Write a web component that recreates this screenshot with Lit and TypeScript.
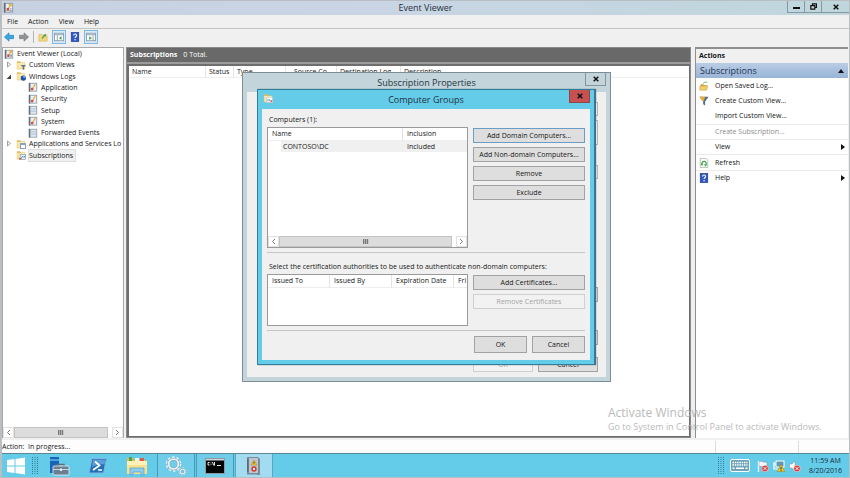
import { LitElement, html, svg, css, nothing, TemplateResult } from "lit";
import { customElement, property } from "lit/decorators.js";
import { classMap } from "lit/directives/class-map.js";

const folder = svg`
  <path d="M1 1.5h4l1 1.500h5v8H1z" fill="#e3bd5c"/>
  <path d="M1.500 4h9v6.500h-9z" fill="#fae6a0"/>
  <path d="M1.500 4h9v1h-9z" fill="#fdf3cf"/>`;

const logbook = svg`
  <rect x="1" y="1" width="10" height="10.500" fill="#8b98a5"/>
  <rect x="3" y="2" width="7" height="8.500" fill="#e9eff4"/>
  <path d="M1 1h1.500v10.500H1z" fill="#5f6f80"/>`;

const icons: Record<string, TemplateResult> = {
  viewer: svg`${logbook}
    <path d="M5.500 2.500l2-1 2.500 2-1 1.500z" fill="#f0b52e"/>
    <path d="M9 3L5 9.500 4 9l3.500-6z" fill="#e4a53a"/>
    <path d="M4 6.500h2.500v3H4z" fill="#cf4b3c"/>
    <path d="M7 7h2.500v1H7zM7 9h2.500v1H7z" fill="#6d87a5"/>`,
  log: svg`${logbook}
    <path d="M9.500 3L6 8 5 7.500l3-5z" fill="#e8ab35"/>
    <circle cx="5" cy="8.500" r="1.700" fill="#d5503f"/>`,
  setup: svg`${logbook}
    <path d="M3.500 4h6M3.500 6h6M3.500 8h6" stroke="#a9c1d8" stroke-width="1"/>`,
  custom: svg`${folder}
    <path d="M5.500 6H12L9.700 8.500V12L8 11V8.500z" fill="#5d7893"/>`,
  windows: svg`${folder}
    <circle cx="8.800" cy="8.500" r="3.200" fill="#1e4fb4"/>
    <path d="M8.500 5.500a3.200 3.200 0 0 1 3 3L9 8z" fill="#8fb4ee"/>`,
  services: svg`${folder}
    <rect x="5.500" y="5.500" width="6" height="6" fill="#fff" stroke="#7d92a8"/>
    <path d="M5.500 6.500h6" stroke="#7fa7d0" stroke-width="1.500"/>`,
  subs: svg`${folder}
    <rect x="5" y="5.500" width="6.500" height="6" fill="#e8f2fb" stroke="#7c9cc0" stroke-width=".8"/>
    <path d="M6 10l2-2.500 1.500 1.500L11 7" fill="none" stroke="#3f79b8"/>
    <path d="M3.500 9.500h3v2h-3z" fill="#d7644c"/>`,
  groups: svg`${folder}
    <rect x="4.500" y="5" width="7" height="6.500" fill="#fff" stroke="#b8c4cf" stroke-width=".8"/>
    <path d="M6 7v3M8 7.500v2.500" stroke="#4f87c7"/>
    <path d="M9 8.500h2v2.500H9z" fill="#e06a5c"/>`,
  back: svg`<path d="M.5 6L6 1v3h5.500v4H6v3z" fill="#38a8e4" stroke="#1c78b8" stroke-width=".7"/>`,
  forward: svg`<path d="M11.500 6L6 1v3H.5v4H6v3z" fill="#8f9396" stroke="#6f7376" stroke-width=".7"/>`,
  up: svg`<path d="M1 3h4l1 1.500h5V11H1z" fill="#f3d67e" stroke="#d3ab4a" stroke-width=".6"/>
    <path d="M4.500 8c.3-2 1.200-3 2.500-3.500L6 3.500 10 2 9.200 5.800 8.300 5C7 6 6.300 6.800 5.800 8.200z" fill="#43a845"/>`,
  pane: svg`<rect x=".5" y="1.500" width="11" height="9" fill="#fff" stroke="#8493a3"/>
    <path d="M1 2h10v2H1z" fill="#a9b8c8"/>
    <path d="M4 4v6.500" stroke="#8493a3"/>
    <path d="M9 5v4.500L6 7.200z" fill="#36a04a"/>`,
  paneRight: svg`<rect x=".5" y="1.500" width="11" height="9" fill="#fff" stroke="#8493a3"/>
    <path d="M1 2h10v2H1z" fill="#a9b8c8"/>
    <path d="M8.500 4v6.500" stroke="#8493a3"/>
    <path d="M4 5v4.500L7 7.200z" fill="#36a04a"/>`,
  help: svg`<rect x="1.500" y=".5" width="9" height="11" fill="#2f58c4" stroke="#1b3c93" stroke-width=".8"/>
    <path d="M4.300 4.200c0-2.400 3.600-2.400 3.600 0 0 1.500-1.800 1.400-1.800 3" fill="none" stroke="#fff" stroke-width="1.300"/>
    <circle cx="6.100" cy="9.200" r=".9" fill="#fff"/>`,
  open: svg`<path d="M2 4h3l1 1h4v2H2z" fill="#cda23c"/>
    <path d="M1 6h9.500L9 11H1z" fill="#f0cf70" stroke="#c89b36" stroke-width=".6"/>
    <path d="M5 3c1.500-2 3.500-2 5-1" fill="none" stroke="#67b257" stroke-width="1.200"/>`,
  filter: svg`<path d="M.5 1h11L7.300 6.500V11.500L5 10V6.500z" fill="#4f6c8c"/>
    <path d="M.5 1h7L5.500 6.500H5z" fill="#efa92f"/>`,
  refresh: svg`<path d="M1.500.5h7l2 2v9h-9z" fill="#fff" stroke="#96a896" stroke-width=".8"/>
    <path d="M3.500 7.500a2.700 2.700 0 1 1 4.600 1" fill="none" stroke="#35a043" stroke-width="1.500"/>
    <path d="M2 7h3.200L3.600 9.500zM6.500 7.500L9.500 8 7 10.500z" fill="#35a043"/>`,
};

const icon = (name: string, size = 10) =>
  svg`<svg class="icon" width=${size} height=${size} viewBox="0 0 12 12" aria-hidden="true">${icons[name]}</svg>`;

const start = html`<svg width="18" height="18" viewBox="0 0 18 18" aria-hidden="true">
  <path d="M0 3l7.500-1v6.600H0zM8.500 1.900L18 .5v8.100H8.500zM0 9.500h7.500V16L0 15zM8.500 9.500H18v8l-9.500-1.400z" fill="#fff"/></svg>`;
const grip = html`<svg width="6" height="18" viewBox="0 0 6 18" aria-hidden="true">
  <path d="M.5 0v18M3 0v18M5.500 0v18" stroke="#2f7c98" stroke-width="1" stroke-dasharray="1 1"/></svg>`;
const serverManager = html`<svg width="22" height="20" viewBox="0 0 22 20" aria-hidden="true">
  <path d="M2 1h9v16H2z" fill="#1566b5"/><path d="M2 4h9" stroke="#69b4ea" stroke-width="1.500"/>
  <path d="M9 10.500V8.500h7v2" fill="none" stroke="#5e6d7c" stroke-width="1.500"/>
  <rect x="5" y="10" width="16" height="9" rx="1" fill="#6c7f92" stroke="#e8f2f8" stroke-width=".8"/>
  <path d="M5 13.500h16" stroke="#c6d5e0"/><path d="M12 12.500h2v2.500h-2z" fill="#eaf1f5"/></svg>`;
const powershell = html`<svg width="20" height="18" viewBox="0 0 20 18" aria-hidden="true">
  <path d="M4 1.500h14.500L15.500 16H1z" fill="#2670b8" stroke="#7db7e2"/>
  <path d="M5 2.500h12.500l-1 5C12 7 8 8 4 10z" fill="#5a9cd6"/>
  <path d="M7 4.500l4.500 4L5 13M10 13h4" fill="none" stroke="#fff" stroke-width="1.700"/></svg>`;
const explorer = html`<svg width="22" height="20" viewBox="0 0 22 20" aria-hidden="true">
  <path d="M1 2h6l1 2h12v14H1z" fill="#e0b94f"/><path d="M3 1h3v4H3z" fill="#4ca64c"/><path d="M9 2h4v3H9z" fill="#f5f5e8"/><path d="M14 2h4v3h-4z" fill="#d75b4b"/>
  <path d="M1 5h20v13H1z" fill="#f8e08c"/><path d="M1 5h20v4H1z" fill="#fdf0b8"/>
  <path d="M4 19v-7h14v7h-3v-3H7v3z" fill="#8fcdf0" stroke="#4a9fd0" stroke-width=".7"/></svg>`;
const gears = html`<svg width="22" height="20" viewBox="0 0 22 20" aria-hidden="true">
  <circle cx="8.500" cy="8" r="6.300" fill="none" stroke="#eef4f7" stroke-width="2.800" stroke-dasharray="2.200 1.760"/>
  <circle cx="8.500" cy="8" r="4.900" fill="none" stroke="#7b9cae" stroke-width="2.800"/>
  <circle cx="8.500" cy="8" r="4.900" fill="none" stroke="#eaf2f6" stroke-width="1.900"/>
  <circle cx="17.500" cy="15.500" r="3.200" fill="none" stroke="#eef4f7" stroke-width="1.500" stroke-dasharray="1.400 1.110"/>
  <circle cx="17.500" cy="15.500" r="2.300" fill="none" stroke="#7b9cae" stroke-width="1.800"/>
  <circle cx="17.500" cy="15.500" r="2.300" fill="none" stroke="#e6eff4" stroke-width="1.100"/></svg>`;
const prompt = html`<svg width="20" height="16" viewBox="0 0 20 16" aria-hidden="true">
  <rect x=".5" y=".5" width="19" height="15" fill="#050505" stroke="#8d9aa3"/><path d="M1 1h18v1.500H1z" fill="#c9d4da"/>
  <path d="M4.500 4.500H3v2.500h1.500M6 4.500v.8M6 6.300v.8M7.500 4l1.200 3.500M9.500 4v3.500M12 7.500h4" fill="none" stroke="#fff" stroke-width=".9"/></svg>`;
const eventLog = html`<svg width="16" height="20" viewBox="0 0 16 20" aria-hidden="true">
  <path d="M1 1h11l2 2v14l-2 1.500H1z" fill="#7d8b98"/><rect x="3" y="2" width="9" height="15" fill="#b9c6d3"/>
  <path d="M1 3h1.500v13H1z" fill="#5b6a78"/><path d="M8 4l3 5H5z" fill="#f6cb2c" stroke="#b98f18" stroke-width=".6"/><path d="M8 5.800v1.800" stroke="#333"/>
  <circle cx="8" cy="13" r="2.700" fill="#d43e32"/><path d="M7 12l2 2M9 12l-2 2" stroke="#fff" stroke-width=".9"/>
  <path d="M12 17l3 1.500h-4z" fill="#54626f"/></svg>`;
const keyboard = html`<svg width="20" height="13" viewBox="0 0 20 13" aria-hidden="true">
  <rect x=".5" y=".5" width="19" height="12" rx="1.500" fill="#6da4b8" stroke="#fff"/>
  <path d="M2.500 3.500h15M2.500 6h15" stroke="#fff" stroke-width="1.500" stroke-dasharray="1.500 .8"/><path d="M2.500 9.300h2M6 9.300h8M15.500 9.300h2" stroke="#fff" stroke-width="1.500"/></svg>`;
const badge = svg`<circle cx="8" cy="8.500" r="3.300" fill="#d93a3a" stroke="#fff" stroke-width=".5"/><path d="M6.700 7.200l2.600 2.600M9.300 7.200L6.700 9.800" stroke="#fff"/>`;
const flag = html`<svg width="12" height="12" viewBox="0 0 12 12" aria-hidden="true">
  <path d="M1.500 1v11" stroke="#fff" stroke-width="1.300"/><path d="M2 1.500c3-1 4 1.500 8 .5v5c-4 1-5-1.500-8-.5z" fill="#f4f8fa" stroke="#70919f" stroke-width=".5"/>${badge}</svg>`;
const network = html`<svg width="12" height="12" viewBox="0 0 12 12" aria-hidden="true">
  <rect x="3" y="1" width="8" height="6" fill="#5d98b4" stroke="#fff"/><path d="M1 2v7h4M1 4h2" fill="none" stroke="#fff" stroke-width="1.200"/>
  <path d="M8 4.500l3.700 7H4.300z" fill="#f8cd2d" stroke="#9c7a12" stroke-width=".5"/><path d="M8 7v2.500M8 10v.8" stroke="#222"/></svg>`;
const sound = html`<svg width="12" height="12" viewBox="0 0 12 12" aria-hidden="true">
  <path d="M.5 4h2.500l3-3v10l-3-3H.5z" fill="#fff" stroke="#70919f" stroke-width=".5"/>${badge}</svg>`;

const shared = css`
  * { box-sizing: border-box; }
  button, input, textarea, select { font: inherit; color: inherit; margin: 0; padding: 0; border: 0; background: none; border-radius: 0; }
  svg { display: block; flex: none; }
  table { border-collapse: separate; border-spacing: 0; table-layout: fixed; width: 100%; }
  th, td { font-weight: 400; text-align: left; padding: 0 0 0 4px; white-space: nowrap; overflow: hidden; }
  ul { list-style: none; margin: 0; padding: 0; }
`;

@customElement("scroll-strip")
class ScrollStrip extends LitElement {
  static styles = [shared, css`
    :host { display: flex; height: 11px; background: #fff; }
    .arrow { width: 11px; display: grid; place-items: center; border: 1px solid #e2e2e2; background: #fff; }
    .track { flex: 1; display: flex; padding-right: 4px; min-width: 0; }
    .thumb { flex: 1; display: grid; place-items: center; background: #dcdcdc; border: 1px solid #c4c4c4; }
  `];
  render() {
    return html`
      <button class="arrow" aria-label="Scroll left"><svg width="5" height="7" viewBox="0 0 5 7"><path d="M4 1L1.500 3.500 4 6" fill="none" stroke="#777"/></svg></button>
      <div class="track"><div class="thumb"><svg width="6" height="5" viewBox="0 0 6 5"><path d="M.5 0v5M2.500 0v5M4.500 0v5" stroke="#777" stroke-width="1.400"/></svg></div></div>
      <button class="arrow" aria-label="Scroll right"><svg width="5" height="7" viewBox="0 0 5 7"><path d="M1 1l2.500 2.500L1 6" fill="none" stroke="#777"/></svg></button>`;
  }
}

@customElement("console-tree")
class ConsoleTree extends LitElement {
  static styles = [shared, css`
    :host { display: flex; flex-direction: column; background: #fff; border: 1px solid #a9a9a9; border-bottom: 0; overflow: hidden; }
    .tree { display: grid; grid-auto-rows: 1fr; height: 113px; flex: none; }
    .row { display: flex; align-items: center; gap: 3px; width: 100%; white-space: nowrap; }
    .arrow { width: 8px; flex: none; display: grid; place-items: center; }
    .depth0 { padding-left: 1px; }
    .depth1 { padding-left: 2px; }
    .depth2 { padding-left: 25px; }
    .label { padding: 0 2px 0 0; line-height: 11px; }
    .picked { background: #f0f0f0; box-shadow: 0 0 0 1px #dedede; }
    .fill { flex: 1; }
  `];
  private rows: [number, string, string, string?][] = [
    [0, "viewer", "Event Viewer (Local)"],
    [1, "custom", "Custom Views", "closed"],
    [1, "windows", "Windows Logs", "open"],
    [2, "log", "Application"],
    [2, "log", "Security"],
    [2, "setup", "Setup"],
    [2, "log", "System"],
    [2, "setup", "Forwarded Events"],
    [1, "services", "Applications and Services Lo", "closed"],
    [1, "subs", "Subscriptions", "none"],
  ];
  render() {
    return html`
      <ul class="tree">${this.rows.map(([depth, name, label, state]) => html`
        <li><button class=${classMap({ row: true, ["depth" + depth]: true })}>
          ${state ? html`<span class="arrow">${state === "none" ? nothing : html`<svg width="6" height="7" viewBox="0 0 6 7">
            ${state === "open" ? svg`<path d="M5 1.500v4.500H.5z" fill="#444"/>` : svg`<path d="M1.500 1l3 2.500-3 2.500z" fill="#fff" stroke="#888" stroke-width=".8"/>`}</svg>`}</span>` : nothing}
          ${icon(name)}<span class=${classMap({ label: true, picked: state === "none" })}>${label}</span>
        </button></li>`)}</ul>
      <div class="fill"></div>
      <scroll-strip></scroll-strip>`;
  }
}

@customElement("subscription-list")
class SubscriptionList extends LitElement {
  static styles = [shared, css`
    :host { display: flex; flex-direction: column; min-width: 0; background: #9c9c9c; border: 1px solid #8a8a8a; }
    .head { height: 14px; background: #696969; color: #fff; display: flex; align-items: center; gap: 6px; padding: 0 3px; }
    .head b { font-weight: 700; }
    .list { flex: 1; margin-top: 2px; background: #fff; border: 2px solid #6e6e6e; border-right-width: 1px; border-bottom-width: 1px; }
    th { border-right: 1px solid #e5e5e5; height: 12px; border-bottom: 1px solid #eee; padding-left: 3px; }
    th:last-child { border-right: 0; }
    .name { width: 77px; } .status { width: 28px; } .type { width: 52px; } .source { width: 51px; padding-left: 8px; } .dest { width: 64px; }
  `];
  render() {
    return html`
      <div class="head"><b>Subscriptions</b><span>0 Total.</span></div>
      <div class="list"><table><thead><tr>
        <th class="name">Name</th><th class="status">Status</th><th class="type">Type</th>
        <th class="source">Source Co...</th><th class="dest">Destination Log</th><th>Description</th>
      </tr></thead></table></div>`;
  }
}

@customElement("actions-pane")
class ActionsPane extends LitElement {
  static styles = [shared, css`
    :host { display: block; background: #fff; border: solid #8f8f8f; border-width: 2px 0 0 1px; }
    .title { height: 14px; line-height: 14px; font-weight: 700; padding-left: 3px; background: #f0f0f0; }
    .section { width: 100%; height: 15px; display: flex; align-items: center; justify-content: space-between; padding: 0 4px; font-size: 9px; color: #1f3450; background: linear-gradient(#bacde5, #98b4d7); }
    .items { display: grid; grid-auto-rows: 1fr; height: 107px; }
    .item { width: 100%; height: 100%; display: flex; align-items: center; gap: 6px; padding: 0 3px; text-align: left; }
    .rule { border-top: 1px solid #ebebeb; }
    .glyph { width: 10px; }
    .text { flex: 1; }
    .item:disabled { color: #8d8d8d; }
  `];
  private items: [string, string, boolean, boolean?][] = [
    ["open", "Open Saved Log...", false],
    ["filter", "Create Custom View...", false],
    ["", "Import Custom View...", false],
    ["", "Create Subscription...", true],
    ["", "View", true, true],
    ["refresh", "Refresh", true],
    ["help", "Help", true, true],
  ];
  render() {
    return html`
      <div class="title">Actions</div>
      <button class="section">Subscriptions<svg width="6" height="4" viewBox="0 0 6 4"><path d="M3 0l3 4H0z" fill="#111"/></svg></button>
      <ul class="items">${this.items.map(([name, label, rule, more]) => html`
        <li class=${classMap({ rule })}><button class="item" ?disabled=${label === "Create Subscription..."}>
          <span class="glyph">${name ? icon(name) : nothing}</span><span class="text">${label}</span>
          ${more ? html`<svg width="4" height="6" viewBox="0 0 4 6"><path d="M0 0l4 3-4 3z" fill="#111"/></svg>` : nothing}
        </button></li>`)}</ul>`;
  }
}

@customElement("dialog-frame")
class DialogFrame extends LitElement {
  @property() heading = "";
  @property() icon = "";
  @property({ type: Boolean, reflect: true }) active = false;
  static styles = [shared, css`
    :host { display: flex; flex-direction: column; padding: 0 4px 4px; background: #c3d5db; border: 1px solid #7d8d96; }
    :host([active]) { background: #64cbe9; border-color: #2f7f9c; box-shadow: 1px 0 1px #4e6b78; }
    .bar { display: grid; grid-template-columns: 1fr auto 1fr; height: 19px; flex: none; color: #1d3440; font-size: 9px; }
    .left { padding: 3px 1px; }
    .name { align-self: center; }
    .close { justify-self: end; width: 21px; height: 13px; display: grid; place-items: center; border: 1px solid #8395a0; border-top: 0; }
    :host([active]) .close { background: #c75050; border-color: #8e4646; }
    .body { flex: 1; background: #f0f0f0; display: flex; flex-direction: column; min-height: 0; }
  `];
  render() {
    return html`
      <div class="bar"><span class="left">${this.icon ? icon(this.icon) : nothing}</span><span class="name">${this.heading}</span>
        <button class="close" aria-label="Close"><svg width="6" height="6" viewBox="0 0 6 6"><path d="M.7.7l4.600 4.600M5.300.7L.7 5.300" stroke="#111" stroke-width="1.500"/></svg></button></div>
      <div class="body"><slot></slot></div>`;
  }
}

@customElement("app-root")
class AppRoot extends LitElement {
  static styles = [shared, css`
    :host { display: flex; flex-direction: column; height: 100vh; position: relative; overflow: hidden; background: #f0f0f0; border: solid #b9bec2; border-width: 1px 1px 1px 2px; font: 7px/10px "Open Sans", "Noto Sans", sans-serif; color: #161616; box-sizing: border-box; }
    .titlebar { display: grid; grid-template-columns: 1fr auto 1fr; height: 14px; flex: none; background: linear-gradient(90deg, #c6d1e1, #c9d5e4 45%, #bfd6dd); font-size: 9px; color: #24323c; }
    .titlebar .app { padding: 1px; }
    .titlebar .name { align-self: center; }
    .controls { display: flex; justify-self: end; height: 12px; }
    .control { width: 17px; display: grid; place-items: center; border: 1px solid #8798a2; border-width: 0 0 1px 1px; }
    .control.wide { width: 28px; }
    .menubar { height: 14px; flex: none; display: flex; gap: 10px; padding: 0 5px; border-bottom: 1px solid #c4c4c4; }
    .toolbar { height: 17px; flex: none; display: flex; align-items: center; gap: 3px; padding: 0 1px 1px; }
    .tool { height: 14px; padding: 0 1px; display: grid; place-items: center; }
    .tool.on { width: 14px; border: 1px solid #7db9e0; background: #d6eaf7; }
    .sep { width: 1px; height: 12px; background: #b5b5b5; }
    .main { flex: 1; display: grid; grid-template-columns: 122px minmax(0, 1fr) 156px; column-gap: 2px; min-height: 0; padding-top: 1px; }
    .main actions-pane { margin: 0 1px 0 2px; }
    .status { height: 13px; margin-top: 2px; flex: none; display: grid; grid-template-columns: 1fr 83px 51px; align-items: center; background: #fdfdfd; }
    .status .cell { border-left: 1px solid #ddd; height: 12px; }
    .taskbar { height: 24px; flex: none; display: flex; background: #64cbe9; border-top: 1px solid #5c8795; }
    .startbtn { width: 28px; display: grid; place-items: center; }
    .grip { width: 10px; display: grid; place-items: center; }
    .task { width: 38px; margin-right: 1px; display: grid; place-items: center; border: 1px solid transparent; border-width: 0 1px; }
    .task.running { background: #70cdea; border-color: #489bb6; }
    .task.current { background: #a3dbf1; border-color: #5aa5c0; }
    .space { flex: 1; }
    .tray { display: flex; align-items: center; gap: 4px; padding: 0 2px 0 4px; }
    .tray .keys { margin-right: 3px; }
    .clock { width: 45px; text-align: center; display: grid; align-content: center; color: #16303a; margin-right: 1px; }
    .watermark { position: absolute; left: 606px; bottom: 44px; color: #b3b3b3; opacity: .9; z-index: 5; white-space: nowrap; }
    .watermark .title { font-size: 12px; line-height: 16px; }
    .watermark .hint { font-size: 9px; line-height: 12px; }
    .props { position: absolute; left: 240px; top: 71px; width: 369px; height: 310px; }
    .groups { position: absolute; left: 255px; top: 88px; width: 338px; height: 276px; }
    .form { display: flex; flex-direction: column; align-items: flex-end; padding: 10px 8px 0; }
    .field { width: 260px; height: 14px; border: 1px solid #b5b5b5; background: #fff; display: block; }
    .field + .field { margin-top: 4px; }
    .field.tall { height: 25px; resize: none; }
    .field.log { margin-top: 20px; background: #efefef; appearance: none; }
    .push { background: #dedede; border: 1px solid #a2a2a2; height: 15px; white-space: nowrap; }
    .push:disabled { background: #f2f2f2; color: #a4a4a4; border-color: #cfcfcf; }
    .push.focus { border-color: #6b9dc4; }
    .push.foot { width: 60px; }
    .events { margin-top: 108px; width: 60px; }
    .adv { margin-top: 28px; width: 60px; }
    .footer { display: flex; gap: 5px; margin-top: 12px; }
    .inner { display: grid; grid-template-columns: minmax(0, 1fr) 112px; column-gap: 5px; padding: 4px 5px 0; }
    .caption { grid-column: 1 / -1; line-height: 14px; padding-left: 2px; }
    .box { background: #fff; border: 1px solid #9a9a9a; display: flex; flex-direction: column; overflow: hidden; }
    .box.computers { height: 121px; }
    .box.certs { height: 52px; }
    .box th { height: 13px; border-right: 1px solid #e3e3e3; border-bottom: 1px solid #eee; }
    .box th:last-child { border-right: 0; }
    .box td { height: 11px; background: #f0f0f0; }
    .box td:first-child { padding-left: 2px; border-left: 13px solid #fff; }
    .wide-col { width: 135px; } .issued { width: 62px; }
    .stack { display: flex; flex-direction: column; gap: 4px; padding-top: 1px; }
    .line { grid-column: 1 / -1; border-top: 1px solid #c6c6c6; margin-top: 4px; }
    .ends { grid-column: 1 / -1; display: flex; justify-content: flex-end; gap: 5px; margin-top: 5px; }
    .ends .push { width: 53px; height: 17px; }
    .gap { grid-column: 1 / -1; height: 7px; }
    .fill { flex: 1; }
  `];
  render() {
    return html`
      <header class="titlebar"><span class="app">${icon("viewer", 11)}</span><span class="name">Event Viewer</span>
        <span class="controls">
          <button class="control" aria-label="Minimize"><svg width="7" height="6" viewBox="0 0 7 6"><path d="M0 4h7" stroke="#111" stroke-width="2"/></svg></button>
          <button class="control" aria-label="Restore"><svg width="7" height="7" viewBox="0 0 7 7"><path d="M2.500 2V.8h4v3.700H5M.8 2.700h4v3.500h-4z" fill="none" stroke="#111" stroke-width="1.200"/></svg></button>
          <button class="control wide" aria-label="Close"><svg width="6" height="6" viewBox="0 0 6 6"><path d="M.7.7l4.600 4.600M5.300.7L.7 5.300" stroke="#111" stroke-width="1.500"/></svg></button>
        </span></header>
      <nav class="menubar">${["File", "Action", "View", "Help"].map((m) => html`<button>${m}</button>`)}</nav>
      <div class="toolbar">
        <button class="tool" aria-label="Back">${icon("back")}</button>
        <button class="tool" aria-label="Forward">${icon("forward")}</button>
        <span class="sep"></span>
        <button class="tool" aria-label="Up">${icon("up")}</button>
        <button class="tool on" aria-label="Console tree">${icon("pane")}</button>
        <button class="tool" aria-label="Help">${icon("help")}</button>
        <button class="tool on" aria-label="Action pane">${icon("paneRight")}</button>
      </div>
      <main class="main">
        <console-tree></console-tree>
        <subscription-list></subscription-list>
        <actions-pane></actions-pane>
      </main>
      <footer class="status"><span>Action:&nbsp; In progress...</span><span class="cell"></span><span class="cell"></span></footer>
      <div class="taskbar">
        <button class="startbtn" aria-label="Start">${start}</button><span class="grip">${grip}</span>
        <button class="task" aria-label="Server Manager">${serverManager}</button>
        <button class="task" aria-label="PowerShell">${powershell}</button>
        <button class="task" aria-label="File Explorer">${explorer}</button>
        <button class="task running" aria-label="Services">${gears}</button>
        <button class="task running" aria-label="Command Prompt">${prompt}</button>
        <button class="task current" aria-label="Event Viewer">${eventLog}</button>
        <span class="space"></span><span class="grip">${grip}</span>
        <div class="tray"><span class="keys">${keyboard}</span>${flag}${network}${sound}</div>
        <div class="clock"><span>11:59 AM</span><span>8/20/2016</span></div>
      </div>

      <dialog-frame class="props" heading="Subscription Properties">
        <div class="form">
          <input class="field" aria-label="Subscription name">
          <textarea class="field tall" aria-label="Description"></textarea>
          <select class="field log" aria-label="Destination log"></select>
          <button class="push events" aria-label="Select Events"></button>
          <button class="push adv" aria-label="Advanced"></button>
          <div class="footer"><button class="push foot" disabled>OK</button><button class="push foot">Cancel</button></div>
        </div>
      </dialog-frame>

      <dialog-frame class="groups" active heading="Computer Groups" icon="groups">
        <div class="inner">
          <div class="caption">Computers (1):</div>
          <div class="box computers">
            <table><thead><tr><th class="wide-col">Name</th><th>Inclusion</th></tr></thead>
              <tbody><tr><td>CONTOSO\\DC</td><td>Included</td></tr></tbody></table>
            <div class="fill"></div><scroll-strip></scroll-strip>
          </div>
          <div class="stack">
            <button class="push focus">Add Domain Computers...</button>
            <button class="push">Add Non-domain Computers...</button>
            <button class="push">Remove</button>
            <button class="push">Exclude</button>
          </div>
          <div class="line"></div>
          <div class="gap"></div>
          <div class="caption">Select the certification authorities to be used to authenticate non-domain computers:</div>
          <div class="box certs">
            <table><thead><tr><th class="issued">Issued To</th><th class="issued">Issued By</th><th class="issued">Expiration Date</th><th>Fri</th></tr></thead></table>
          </div>
          <div class="stack">
            <button class="push">Add Certificates...</button>
            <button class="push" disabled>Remove Certificates</button>
          </div>
          <div class="line"></div>
          <div class="ends"><button class="push">OK</button><button class="push">Cancel</button></div>
        </div>
      </dialog-frame>

      <div class="watermark"><div class="title">Activate Windows</div><div class="hint">Go to System in Control Panel to activate Windows.</div></div>`;
  }
}
